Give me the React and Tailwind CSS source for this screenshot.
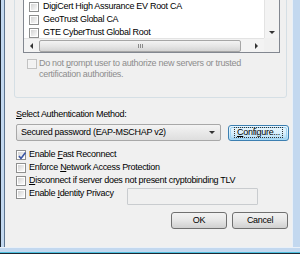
import React from "react";

function Check({ checked = false, disabled = false }) {
  return (
    <div
      className={`w-[10px] h-[10px] shrink-0 border p-[1px] ${
        disabled ? "border-[#c2c2c2] bg-[#f4f4f4]" : "border-[#8e8f8f] bg-white"
      }`}
    >
      <div
        className={`w-full h-full relative ${
          disabled ? "bg-[#f2f2f2]" : "bg-gradient-to-br from-[#d3d3d3] to-[#fbfbfb]"
        }`}
      >
        {checked && (
          <svg width="10" height="10" viewBox="0 0 10 10" className="absolute left-[-1px] top-[-1px]">
            <path d="M2 5 L4 7.5 L8.5 1.5" fill="none" stroke="#3b56a5" strokeWidth="1.6" />
          </svg>
        )}
      </div>
    </div>
  );
}

function Row({ children, checked, u, rest, pre = "" }) {
  return (
    <div className="h-[13px] flex items-center gap-[3px]">
      <Check checked={checked} />
      <span className="whitespace-nowrap">
        {pre}
        <span className="underline underline-offset-[1px]">{u}</span>
        {rest}
      </span>
    </div>
  );
}

function ListRow({ label }) {
  return (
    <div className="h-[13px] flex items-center gap-[2px] pl-[5px] whitespace-nowrap">
      <Check />
      <span className="ml-[2px]">{label}</span>
    </div>
  );
}

function Arrow({ dir }) {
  const paths = {
    down: "M0 0 L6 0 L3 3 Z",
    left: "M3 0 L3 6 L0 3 Z",
    right: "M0 0 L0 6 L3 3 Z",
  };
  const w = dir === "down" ? 6 : 3;
  const h = dir === "down" ? 3 : 6;
  return (
    <svg width={w} height={h} viewBox={`0 0 ${w} ${h}`}>
      <path d={paths[dir]} fill="#333" />
    </svg>
  );
}

export default function App() {
  return (
    <div className="w-[300px] h-[254px] flex flex-col overflow-hidden bg-[#c3d8ef] font-['Liberation_Sans',Arial,sans-serif] text-[9px] leading-[11px] tracking-[-0.3px] text-black">
      <div className="flex h-[247px]">
        <div className="w-[1px] bg-[#1d2733]" />
        <div className="w-[3px] bg-[#c3d8ef]" />
        <div className="w-[1px] bg-[#5e7590]" />
        <div className="w-[287px] bg-[#f0f0f0] flex flex-col overflow-hidden">
          {/* group box */}
          <div className="ml-[9px] mt-[-20px] w-[273px] h-[118px] shrink-0 border border-[#d5dfe5] rounded-[3px] flex flex-col px-[8px]">
            <div className="mt-[4px] w-[257px] h-[68px] shrink-0 border border-[#828790] bg-white flex flex-col">
              <div className="flex h-[52px]">
                <div className="flex-1 overflow-hidden pt-[14px]">
                  <ListRow label="DigiCert High Assurance EV Root CA" />
                  <ListRow label="GeoTrust Global CA" />
                  <ListRow label="GTE CyberTrust Global Root" />
                </div>
                <div className="w-[15px] bg-[#f3f3f3] border-l border-[#e3e3e3] flex flex-col justify-end items-center pb-[4px]">
                  <Arrow dir="down" />
                </div>
              </div>
              <div className="flex h-[14px]">
                <div className="flex-1 bg-[#f3f3f3] border-t border-[#e3e3e3] flex items-center">
                  <div className="w-[15px] flex justify-center">
                    <Arrow dir="left" />
                  </div>
                  <div className="w-[202px] h-[12px] rounded-[2px] border border-[#a6a6a6] bg-gradient-to-b from-[#f3f3f3] via-[#e6e6e6] to-[#d4d4d4] flex items-center justify-center">
                    <div className="flex gap-[1px]">
                      <div className="w-[1px] h-[4px] bg-[#8a8a8a]" />
                      <div className="w-[1px] h-[4px] bg-[#8a8a8a]" />
                      <div className="w-[1px] h-[4px] bg-[#8a8a8a]" />
                    </div>
                  </div>
                  <div className="flex-1" />
                  <div className="w-[15px] flex justify-center">
                    <Arrow dir="right" />
                  </div>
                </div>
                <div className="w-[15px] bg-[#f0f0f0]" />
              </div>
            </div>
            <div className="flex items-start mt-[5px] ml-[4px] gap-[2px]">
              <div className="mt-[1px]">
                <Check disabled />
              </div>
              <div className="text-[#8d8d8d] leading-[11px]">
                <div>
                  Do not <span className="underline">p</span>rompt user to authorize new servers or trusted
                </div>
                <div>certification authorities.</div>
              </div>
            </div>
          </div>

          <div className="pl-[11px] mt-[10px] h-[12px] leading-[12px] whitespace-nowrap">
            <span className="underline">S</span>elect Authentication Method:
          </div>

          <div className="flex items-center mt-[4px] pl-[11px] gap-[7px]">
            <div className="w-[205px] h-[17px] rounded-[2px] border border-[#a8a8a8] bg-gradient-to-b from-[#f4f4f4] to-[#dedede] flex items-center pl-[4px] pr-[5px]">
              <span className="flex-1 whitespace-nowrap">Secured password (EAP-MSCHAP v2)</span>
              <Arrow dir="down" />
            </div>
            <div className="w-[61px] h-[16px] rounded-[3px] border border-[#3c7fb1] bg-gradient-to-b from-[#eaf6fd] via-[#d9f0fc] to-[#a7d9f5] p-[1px]">
              <div className="w-full h-full rounded-[2px] border border-[#9fd4f3] flex items-center justify-center">
                <span className="outline outline-1 outline-dotted outline-[#333] px-[2px] leading-[9px]">
                  <span className="underline">C</span>onfigure...
                </span>
              </div>
            </div>
          </div>

          <div className="mt-[7px] pl-[11px] flex flex-col">
            <Row checked u="F" pre="Enable " rest="ast Reconnect" />
            <Row pre="Enforce " u="N" rest="etwork Access Protection" />
            <Row u="D" rest="isconnect if server does not present cryptobinding TLV" />
            <div className="flex items-start">
              <div className="w-[111px]">
                <Row pre="Enable " u="I" rest="dentity Privacy" />
              </div>
              <div className="mt-[1px] w-[131px] h-[17px] border border-[#c9cccf] rounded-[1px] bg-[#f0f0f0]" />
            </div>
          </div>

          <div className="mt-[7px] flex justify-end pr-[4px] gap-[5px]">
            <div className="w-[56px] h-[17px] rounded-[3px] border border-[#707070] bg-gradient-to-b from-[#f2f2f2] via-[#e6e6e6] to-[#d0d0d0] flex items-center justify-center">
              OK
            </div>
            <div className="w-[56px] h-[17px] rounded-[3px] border border-[#707070] bg-gradient-to-b from-[#f2f2f2] via-[#e6e6e6] to-[#d0d0d0] flex items-center justify-center">
              Cancel
            </div>
          </div>
        </div>
        <div className="w-[1px] bg-[#e9f0f8]" />
        <div className="flex-1 bg-[#c3d8ef]" />
      </div>
      <div className="h-[1px] bg-[#e9f0f8]" />
      <div className="h-[4px] bg-[#c3d8ef]" />
      <div className="h-[1px] bg-[#4fc0df]" />
      <div className="h-[1px] bg-[#1d2733]" />
    </div>
  );
}
